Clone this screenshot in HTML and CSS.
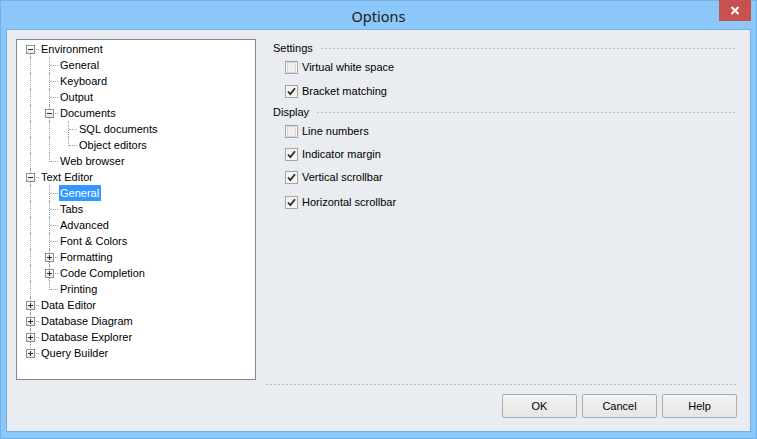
FILE: index.html
```html
<!DOCTYPE html>
<html>
<head>
<meta charset="utf-8">
<title>Options</title>
<link rel="stylesheet" href="styles.css">
</head>
<body>
<div class="window">
  <div class="titlebar">
    <span class="title">Options</span>
    <div class="close">
      <svg width="10" height="9" viewBox="0 0 10 9"><path d="M1.5 1 L8.5 8 M8.5 1 L1.5 8" stroke="#fff" stroke-width="2"/></svg>
    </div>
  </div>
  <div class="client">
    <div class="main">
      <div class="tree">
        <div class="row"><span class="cell f"><span class="box minus"></span></span><span class="label">Environment</span></div>
        <div class="row"><span class="cell i"></span><span class="cell t"></span><span class="label">General</span></div>
        <div class="row"><span class="cell i"></span><span class="cell t"></span><span class="label">Keyboard</span></div>
        <div class="row"><span class="cell i"></span><span class="cell t"></span><span class="label">Output</span></div>
        <div class="row"><span class="cell i"></span><span class="cell t"><span class="box minus"></span></span><span class="label">Documents</span></div>
        <div class="row"><span class="cell i"></span><span class="cell i"></span><span class="cell t"></span><span class="label">SQL documents</span></div>
        <div class="row"><span class="cell i"></span><span class="cell i"></span><span class="cell l"></span><span class="label">Object editors</span></div>
        <div class="row"><span class="cell i"></span><span class="cell l"></span><span class="label">Web browser</span></div>
        <div class="row"><span class="cell t"><span class="box minus"></span></span><span class="label">Text Editor</span></div>
        <div class="row"><span class="cell i"></span><span class="cell t"></span><span class="label selected">General</span></div>
        <div class="row"><span class="cell i"></span><span class="cell t"></span><span class="label">Tabs</span></div>
        <div class="row"><span class="cell i"></span><span class="cell t"></span><span class="label">Advanced</span></div>
        <div class="row"><span class="cell i"></span><span class="cell t"></span><span class="label">Font &amp; Colors</span></div>
        <div class="row"><span class="cell i"></span><span class="cell t"><span class="box plus"></span></span><span class="label">Formatting</span></div>
        <div class="row"><span class="cell i"></span><span class="cell t"><span class="box plus"></span></span><span class="label">Code Completion</span></div>
        <div class="row"><span class="cell i"></span><span class="cell l"></span><span class="label">Printing</span></div>
        <div class="row"><span class="cell t"><span class="box plus"></span></span><span class="label">Data Editor</span></div>
        <div class="row"><span class="cell t"><span class="box plus"></span></span><span class="label">Database Diagram</span></div>
        <div class="row"><span class="cell t"><span class="box plus"></span></span><span class="label">Database Explorer</span></div>
        <div class="row"><span class="cell l"><span class="box plus"></span></span><span class="label">Query Builder</span></div>
      </div>
      <div class="panel">
        <div class="group"><span>Settings</span><span class="dash"></span></div>
        <div class="check g3"><span class="cb"></span><span>Virtual white space</span></div>
        <div class="check g8"><span class="cb on"><svg width="9" height="9" viewBox="0 0 9 9"><path d="M1 4.5 L3.3 7 L8 1.2" fill="none" stroke="#2b2b2b" stroke-width="1.8"/></svg></span><span>Bracket matching</span></div>
        <div class="group g5"><span>Display</span><span class="dash"></span></div>
        <div class="check g3"><span class="cb"></span><span>Line numbers</span></div>
        <div class="check g7"><span class="cb on"><svg width="9" height="9" viewBox="0 0 9 9"><path d="M1 4.5 L3.3 7 L8 1.2" fill="none" stroke="#2b2b2b" stroke-width="1.8"/></svg></span><span>Indicator margin</span></div>
        <div class="check g7"><span class="cb on"><svg width="9" height="9" viewBox="0 0 9 9"><path d="M1 4.5 L3.3 7 L8 1.2" fill="none" stroke="#2b2b2b" stroke-width="1.8"/></svg></span><span>Vertical scrollbar</span></div>
        <div class="check g9"><span class="cb on"><svg width="9" height="9" viewBox="0 0 9 9"><path d="M1 4.5 L3.3 7 L8 1.2" fill="none" stroke="#2b2b2b" stroke-width="1.8"/></svg></span><span>Horizontal scrollbar</span></div>
      </div>
    </div>
    <div class="footer">
      <div class="sep"></div>
      <div class="buttons">
        <button class="btn">OK</button>
        <button class="btn">Cancel</button>
        <button class="btn">Help</button>
      </div>
    </div>
  </div>
</div>
</body>
</html>
```
FILE: styles.css
```css
* { box-sizing: border-box; }
html, body { margin: 0; padding: 0; }
body {
  width: 757px;
  height: 439px;
  overflow: hidden;
  font-family: "Liberation Sans", Arial, sans-serif;
  font-size: 11px;
  color: #000;
}
.window {
  width: 757px;
  height: 439px;
  background: #8bc7f8;
  border: 1px solid #72b0e6;
  display: flex;
  flex-direction: column;
}
.titlebar {
  position: relative;
  height: 28px;
  display: flex;
  justify-content: center;
  align-items: center;
  padding-top: 2px;
}
.title {
  font-family: "Noto Sans", "Open Sans", sans-serif;
  font-size: 14.5px;
  color: #202020;
}
.close {
  position: absolute;
  right: 5px;
  top: -1px;
  width: 32px;
  height: 21px;
  background: #c75050;
  display: flex;
  align-items: center;
  justify-content: center;
}
.client {
  margin: 0 5px 6px 5px;
  flex: 1;
  background: #e9ecf0;
  border: 1px solid #78b0e0;
  padding: 9px 13px 13px 9px;
  display: flex;
  flex-direction: column;
}
.main {
  display: flex;
  height: 341px;
}
.tree {
  width: 240px;
  height: 341px;
  background: #fff;
  border: 1px solid #828790;
  padding: 1px 0 0 4px;
}
.row {
  display: flex;
  height: 16px;
}
.cell {
  position: relative;
  width: 19px;
  height: 16px;
  flex: none;
}
.cell::before, .cell::after {
  content: "";
  position: absolute;
}
.cell.i::before, .cell.t::before {
  left: 9px; top: 0; height: 16px;
  border-left: 1px dotted #a0a0a0;
}
.cell.l::before {
  left: 9px; top: 0; height: 9px;
  border-left: 1px dotted #a0a0a0;
}
.cell.f::before {
  left: 9px; top: 8px; height: 8px;
  border-left: 1px dotted #a0a0a0;
}
.cell.t::after, .cell.l::after, .cell.f::after {
  left: 10px; top: 8px; width: 8px;
  border-top: 1px dotted #a0a0a0;
}
.box {
  position: absolute;
  left: 5px;
  top: 4px;
  width: 9px;
  height: 9px;
  border: 1px solid #919191;
  background: linear-gradient(#ffffff, #e6e6e6);
  z-index: 1;
}
.box::before {
  content: "";
  position: absolute;
  left: 1px; top: 3px;
  width: 5px; height: 1px;
  background: #2a2a2a;
}
.box.plus::after {
  content: "";
  position: absolute;
  left: 3px; top: 1px;
  width: 1px; height: 5px;
  background: #2a2a2a;
}
.label {
  height: 16px;
  line-height: 16px;
  padding: 0 2px 0 1px;
  white-space: nowrap;
}
.label.selected {
  background: #3399ff;
  color: #fff;
}
.panel {
  flex: 1;
  margin-left: 10px;
  padding-top: 1px;
  display: flex;
  flex-direction: column;
}
.group {
  display: flex;
  align-items: center;
  height: 16px;
  line-height: 16px;
  padding-left: 7px;
  white-space: nowrap;
}
.dash {
  flex: 1;
  height: 1px;
  margin-left: 8px;
  background: repeating-linear-gradient(to right, #bcbcbc 0 2px, transparent 2px 4px);
}
.check {
  display: flex;
  align-items: center;
  height: 16px;
  line-height: 16px;
  padding-left: 19px;
  white-space: nowrap;
}
.g3 { margin-top: 3px; }
.g5 { margin-top: 5px; }
.g7 { margin-top: 7px; }
.g8 { margin-top: 8px; }
.g9 { margin-top: 9px; }
.cb {
  width: 13px;
  height: 13px;
  border: 1px solid #a4a4a4;
  background: #fdfdfd;
  padding: 1px;
  margin-right: 4px;
  display: flex;
  align-items: center;
  justify-content: center;
  flex: none;
}
.cb::before {
  content: "";
  display: block;
  width: 9px;
  height: 9px;
  border: 1px solid #d4d4d4;
  background: #eeeeee;
}
.cb.on::before { display: none; }
.cb.on { background: #f4f4f4; }
.footer {
  margin-left: 250px;
  display: flex;
  flex-direction: column;
}
.sep {
  margin-top: 4px;
  height: 1px;
  background: repeating-linear-gradient(to right, #bcbcbc 0 2px, transparent 2px 4px);
}
.buttons {
  margin-top: 9px;
  display: flex;
  justify-content: flex-end;
  gap: 5px;
}
.btn {
  width: 75px;
  height: 24px;
  border: 1px solid #adadad;
  border-radius: 2px;
  background: linear-gradient(#f3f3f3, #e6e6e6);
  font-family: "Liberation Sans", Arial, sans-serif;
  font-size: 11px;
  color: #000;
  padding: 0;
}
```
